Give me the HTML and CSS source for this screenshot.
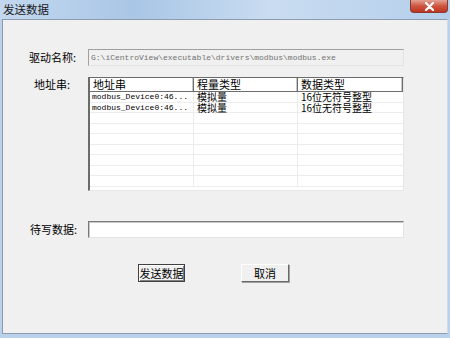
FILE: index.html
```html
<!DOCTYPE html>
<html lang="zh-CN">
<head>
  <meta charset="UTF-8">
  <title>发送数据</title>
  <link rel="stylesheet" href="styles.css">
</head>
<body>
  <div class="window">
    <div class="titlebar">
      <span class="title">发送数据</span>
      <div class="close-btn">
        <svg width="11" height="9" viewBox="0 0 11 9">
          <path d="M2 1 L9 8 M9 1 L2 8" stroke="#fff" stroke-width="2.2" stroke-linecap="round"/>
        </svg>
      </div>
    </div>

    <div class="client">
      <div class="row row-driver">
        <span class="label label-driver">驱动名称:</span>
        <div class="field field-disabled">G:\iCentroView\executable\drivers\modbus\modbus.exe</div>
      </div>

      <div class="row row-list">
        <span class="label label-addr">地址串:</span>
        <div class="listview">
          <div class="lv-header">
            <div class="lv-col c1">地址串</div>
            <div class="lv-col c2">程量类型</div>
            <div class="lv-col c3">数据类型</div>
          </div>
          <div class="lv-body">
            <div class="lv-row">
              <div class="lv-cell c1 mono">modbus_Device0:46...</div>
              <div class="lv-cell c2">模拟量</div>
              <div class="lv-cell c3">16位无符号整型</div>
            </div>
            <div class="lv-row">
              <div class="lv-cell c1 mono">modbus_Device0:46...</div>
              <div class="lv-cell c2">模拟量</div>
              <div class="lv-cell c3">16位无符号整型</div>
            </div>
            <div class="lv-row"><div class="lv-cell c1"></div><div class="lv-cell c2"></div><div class="lv-cell c3"></div></div>
            <div class="lv-row"><div class="lv-cell c1"></div><div class="lv-cell c2"></div><div class="lv-cell c3"></div></div>
            <div class="lv-row"><div class="lv-cell c1"></div><div class="lv-cell c2"></div><div class="lv-cell c3"></div></div>
            <div class="lv-row"><div class="lv-cell c1"></div><div class="lv-cell c2"></div><div class="lv-cell c3"></div></div>
            <div class="lv-row"><div class="lv-cell c1"></div><div class="lv-cell c2"></div><div class="lv-cell c3"></div></div>
            <div class="lv-row"><div class="lv-cell c1"></div><div class="lv-cell c2"></div><div class="lv-cell c3"></div></div>
            <div class="lv-row"><div class="lv-cell c1"></div><div class="lv-cell c2"></div><div class="lv-cell c3"></div></div>
          </div>
        </div>
      </div>

      <div class="row row-write">
        <span class="label label-write">待写数据:</span>
        <div class="field field-edit"></div>
      </div>

      <div class="buttons">
        <button class="btn btn-default">发送数据</button>
        <button class="btn">取消</button>
      </div>
    </div>
  </div>
</body>
</html>
```

FILE: styles.css
```css
body {
  margin: 0;
  padding: 0;
  width: 450px;
  height: 338px;
  overflow: hidden;
  font-family: "Noto Sans CJK SC", "Liberation Sans", sans-serif;
  font-size: 11px;
  color: #000;
}

.window {
  width: 450px;
  height: 338px;
  box-sizing: border-box;
  background: #b9d1ea;
  padding: 0 2px 4px 2px;
  display: flex;
  flex-direction: column;
}

.titlebar {
  height: 19px;
  margin: 0 -2px;
  padding: 0 2px 0 3px;
  display: flex;
  align-items: flex-start;
  justify-content: space-between;
  background: linear-gradient(90deg, #c3d8ef 0%, #a9c6e6 30%, #c9dcf1 60%, #b5cfeb 100%);
}

.title {
  font-size: 11.5px;
  line-height: 18px;
  color: #1a1a1a;
}

.close-btn {
  width: 36px;
  height: 12px;
  border: 1px solid #8a3a33;
  border-top: none;
  border-radius: 0 0 4px 4px;
  background: linear-gradient(180deg, #e3a192 0%, #cf5540 50%, #bd3420 100%);
  display: flex;
  align-items: center;
  justify-content: center;
}

.client {
  flex: 1;
  background: #f0f0f0;
  border: 1px solid #8c9cae;
  border-right-color: #cfdbe8;
  display: flex;
  flex-direction: column;
}

.row {
  display: flex;
  align-items: flex-start;
}

.label {
  width: 85px;
  box-sizing: border-box;
  font-size: 11px;
  line-height: 14px;
}

.label-driver {
  padding-left: 26px;
  margin-top: 1px;
}

.label-addr {
  padding-left: 31px;
}

.label-write {
  padding-left: 27px;
  margin-top: 1px;
}

.row-driver {
  margin-top: 29px;
}

.row-list {
  margin-top: 11px;
}

.row-write {
  margin-top: 30px;
}

.field {
  width: 316px;
  height: 17px;
  box-sizing: border-box;
}

.field-disabled {
  border: 1px solid #a0a0a0;
  border-right-color: #e3e3e3;
  border-bottom-color: #e3e3e3;
  background: #f0f0f0;
  color: #707070;
  font-family: "Liberation Mono", monospace;
  font-size: 8px;
  line-height: 15px;
  padding-left: 2px;
}

.field-edit {
  border: 1px solid #7a7a7a;
  border-right-color: #e3e3e3;
  border-bottom-color: #e3e3e3;
  box-shadow: inset 1px 1px 0 #c8c8c8;
  background: #fff;
}

.listview {
  width: 316px;
  height: 114px;
  box-sizing: border-box;
  border: 1px solid #6b6b6b;
  border-left-width: 2px;
  border-right-color: #e6e6e6;
  border-bottom-color: #e6e6e6;
  background: #fff;
  overflow: hidden;
}

.lv-header {
  display: flex;
  height: 13px;
  border-bottom: 1px solid #6e6e6e;
}

.lv-col {
  box-sizing: border-box;
  padding-left: 3px;
  font-size: 11px;
  line-height: 13px;
  border-right: 1px solid #6e6e6e;
  box-shadow: inset -1px 0 0 #c8c8c8;
}

.c1 {
  width: 104px;
}

.c2 {
  width: 104px;
}

.c3 {
  flex: 1;
}

.lv-row {
  display: flex;
  height: 10.5px;
  border-bottom: 1px solid #ececec;
  box-sizing: border-box;
}

.lv-cell {
  box-sizing: border-box;
  padding-left: 3px;
  font-size: 10px;
  line-height: 10px;
  border-right: 1px solid #ececec;
  white-space: nowrap;
}

.lv-cell.c1 {
  width: 104px;
  padding-left: 2px;
}

.lv-cell.c2 {
  width: 104px;
}

.lv-cell.c3 {
  border-right: none;
}

.mono {
  font-family: "Liberation Mono", monospace;
  font-size: 8px;
}

.buttons {
  display: flex;
  margin-top: 26px;
  padding-left: 135px;
  gap: 56px;
}

.btn {
  width: 48px;
  height: 18px;
  padding: 0;
  font-family: "Noto Sans CJK SC", sans-serif;
  font-size: 11px;
  line-height: 14px;
  color: #000;
  background: #f0f0f0;
  border: 1px solid #fff;
  border-right-color: #696969;
  border-bottom-color: #696969;
  box-shadow: 1px 1px 0 #a0a0a0;
}

.btn-default {
  width: 47px;
  border: 1px solid #404040;
  box-shadow: inset 1px 1px 0 #fff, inset -1px -1px 0 #808080;
}
```
